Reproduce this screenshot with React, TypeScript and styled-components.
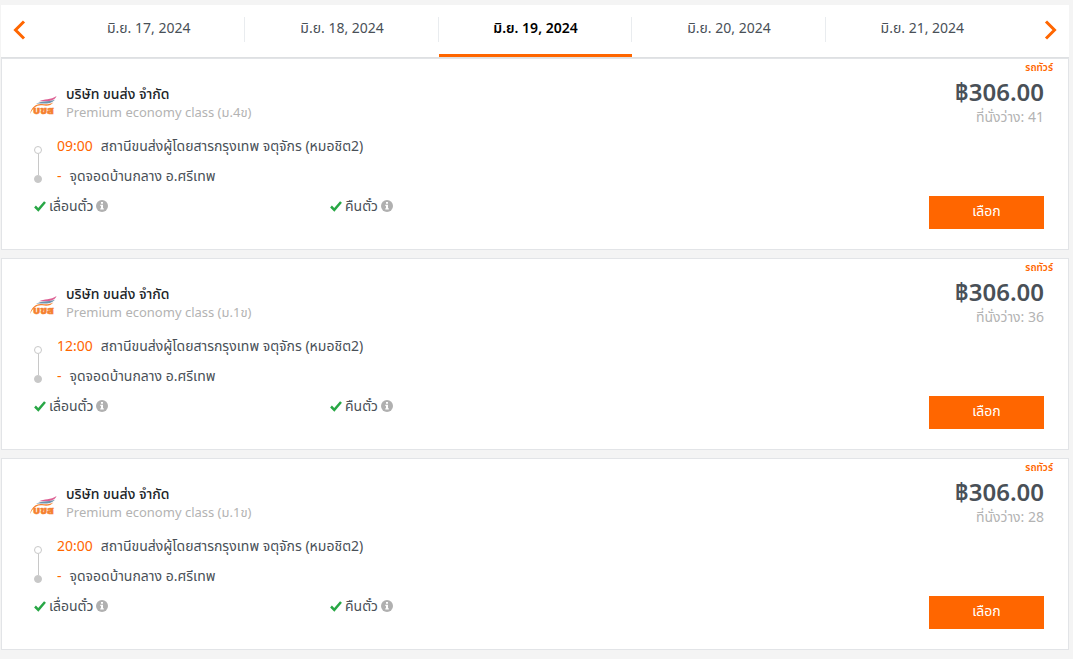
import React from 'react';
import styled, { createGlobalStyle } from 'styled-components';

const GlobalStyle = createGlobalStyle`
  * { box-sizing: border-box; }
  body {
    margin: 0;
    background: #f4f4f4;
    color: #495057;
    font-family: "Noto Sans", "Noto Sans Thai", "Open Sans", sans-serif;
    font-size: 14px;
    line-height: 20px;
  }
  button { font: inherit; border: 0; padding: 0; cursor: pointer; }
`;

const Page = styled.main`
  padding: 5px 4px 8px 1px;
`;

const DateBar = styled.nav`
  display: flex;
  height: 52px;
  background: #fff;
`;

const Arrow = styled.button<{ $side: 'left' | 'right' }>`
  flex: 0 0 ${p => (p.$side === 'left' ? '51px' : '50px')};
  display: flex;
  align-items: center;
  justify-content: ${p => (p.$side === 'left' ? 'flex-start' : 'flex-end')};
  padding: 0 12px 2px;
  background: none;
`;

const DateTab = styled.button<{ $active: boolean }>`
  flex: 1;
  position: relative;
  padding-bottom: 3px;
  background: none;
  color: ${p => (p.$active ? '#000' : '#495057')};
  font-weight: ${p => (p.$active ? 600 : 400)};
  border-bottom: 3px solid ${p => (p.$active ? '#ff6600' : 'transparent')};

  &:not(:last-of-type)::after {
    content: '';
    position: absolute;
    right: 0;
    top: 12px;
    width: 1px;
    height: 25px;
    background: #e9ecef;
  }
`;

const Tabs = styled.div`
  flex: 1;
  display: flex;
`;

const TripList = styled.div`
  display: grid;
  gap: 8px;
  border-top: 1px solid #dee0e2;
`;

const Card = styled.article`
  display: flex;
  min-height: 192px;
  background: #fff;
  border: 1px solid #e2e4e7;
`;

const Details = styled.div`
  flex: 1;
  padding-top: 26px;
`;

const Operator = styled.header`
  display: flex;
  gap: 8px;
  padding-left: 28px;
  margin-bottom: 13px;
`;

const LogoBox = styled.div`
  flex: none;
  width: 28px;
  padding-top: 11px;
`;

const OperatorName = styled.h2`
  margin: 0;
  color: #212529;
  font-size: 14px;
  line-height: 18px;
  font-weight: 500;
`;

const BusClass = styled.p`
  margin: 0;
  color: #b3b3b3;
  font-size: 13px;
  line-height: 18px;
`;

const Route = styled.div`
  display: flex;
  gap: 14px;
  padding-left: 31px;
`;

const Track = styled.div`
  display: flex;
  flex-direction: column;
  align-items: center;
  width: 10px;
  padding-top: 10px;
`;

const Stop = styled.span<{ $end?: boolean }>`
  width: 8px;
  height: 8px;
  border: 1px solid #c8c8c8;
  border-radius: 50%;
  background: ${p => (p.$end ? '#c8c8c8' : '#fff')};
`;

const Line = styled.span`
  width: 1px;
  height: 21px;
  background: #c8c8c8;
`;

const Stops = styled.div`
  line-height: 30px;
  margin-top: -5px;
`;

const StopRow = styled.div`
  display: flex;
  gap: 8px;
  height: 30px;
  white-space: nowrap;
`;

const Time = styled.span`
  color: #ff6600;
`;

const Perks = styled.div`
  display: grid;
  grid-template-columns: repeat(3, 1fr);
`;

const Perk = styled.div`
  display: flex;
  align-items: center;
  gap: 3px;
  height: 30px;
  padding-left: 32px;
`;

const InfoButton = styled.button`
  display: flex;
  background: none;
`;

const Side = styled.div`
  flex: 0 0 178px;
  display: flex;
  flex-direction: column;
  align-items: flex-end;
  padding-right: 24px;
`;

const Kind = styled.span`
  margin-right: -9px;
  color: #ff6600;
  font-size: 10px;
  line-height: 16px;
  font-weight: 600;
`;

const Price = styled.strong`
  font-size: 24px;
  line-height: 34px;
  font-weight: 600;
`;

const Seats = styled.span`
  color: #b3b3b3;
  line-height: 16px;
`;

const SelectButton = styled.button`
  width: 115px;
  height: 33px;
  margin-top: 71px;
  padding-bottom: 4px;
  background: #ff6600;
  color: #fff;
`;

const Chevron = ({ side }: { side: 'left' | 'right' }) => (
  <svg width="13" height="20" viewBox="0 0 13 20" fill="none" stroke="#ff6600" strokeWidth="3">
    <path d={side === 'left' ? 'M11 1.5 2.500 10l8.500 8.500' : 'M2 1.500 10.500 10l-8.500 8.500'} />
  </svg>
);

const LogoText = styled.text`
  font-size: 11px;
  font-weight: 900;
  fill: #f5812f;
  stroke: #f5812f;
  stroke-width: 0.5px;
`;

const Logo = () => (
  <svg width="28" height="22" viewBox="0 0 28 22" role="img" aria-label="บขส">
    <path d="M9 5.500C14 2.500 21 4 26.500 0 25.500 3.500 21 5 17 5.300 13.500 5.500 11 5 9 5.500Z" fill="#dc5f93" />
    <path d="M6 8c5-3.800 11-1.500 19-4.300-3 3.200-7 3.900-11 3.900C11 7.600 9 7.300 6 8Z" fill="#6d93ad" />
    <path d="M0 18C1.500 11 6 7.300 12 8c5 .7 8 .2 11.500-1.800-2.500 3.300-6 4-11 3.100C7 8.500 3 11.500 0 18Z" fill="#f5812f" />
    <LogoText x="3" y="18">บขส</LogoText>
  </svg>
);

const Check = () => (
  <svg width="12" height="12" viewBox="0 0 12 12" fill="none" stroke="#28a745" strokeWidth="2.500">
    <path d="M1 6.500 4.300 9.800 11 2" />
  </svg>
);

const InfoIcon = () => (
  <svg width="12" height="12" viewBox="0 0 12 12">
    <circle cx="6" cy="6" r="6" fill="#b0b0b0" />
    <path d="M5 2h2v1.700H5ZM4.300 4.800H7v3.500h.8v1.200H4.300V8.300H5V6h-.7Z" fill="#fff" />
  </svg>
);

const days = [17, 18, 19, 20, 21];

const trips = [
  { time: '09:00', bus: 'ม.4ข', seats: 41 },
  { time: '12:00', bus: 'ม.1ข', seats: 36 },
  { time: '20:00', bus: 'ม.1ข', seats: 28 },
];

export default function App() {
  return (
    <>
      <GlobalStyle />
      <Page>
        <DateBar>
          <Arrow $side="left" aria-label="ก่อนหน้า"><Chevron side="left" /></Arrow>
          <Tabs>
            {days.map(day => (
              <DateTab key={day} $active={day === 19}>{`มิ.ย. ${day}, 2024`}</DateTab>
            ))}
          </Tabs>
          <Arrow $side="right" aria-label="ถัดไป"><Chevron side="right" /></Arrow>
        </DateBar>
        <TripList>
          {trips.map(trip => (
            <Card key={trip.time}>
              <Details>
                <Operator>
                  <LogoBox><Logo /></LogoBox>
                  <div>
                    <OperatorName>บริษัท ขนส่ง จำกัด</OperatorName>
                    <BusClass>{`Premium economy class (${trip.bus})`}</BusClass>
                  </div>
                </Operator>
                <Route>
                  <Track>
                    <Stop />
                    <Line />
                    <Stop $end />
                  </Track>
                  <Stops>
                    <StopRow><Time>{trip.time}</Time><span>สถานีขนส่งผู้โดยสารกรุงเทพ จตุจักร (หมอชิต2)</span></StopRow>
                    <StopRow><Time>-</Time><span>จุดจอดบ้านกลาง อ.ศรีเทพ</span></StopRow>
                  </Stops>
                </Route>
                <Perks>
                  {['เลื่อนตั๋ว', 'คืนตั๋ว'].map(label => (
                    <Perk key={label}>
                      <Check />
                      <span>{label}</span>
                      <InfoButton aria-label={label}><InfoIcon /></InfoButton>
                    </Perk>
                  ))}
                </Perks>
              </Details>
              <Side>
                <Kind>รถทัวร์</Kind>
                <Price>฿306.00</Price>
                <Seats>{`ที่นั่งว่าง: ${trip.seats}`}</Seats>
                <SelectButton>เลือก</SelectButton>
              </Side>
            </Card>
          ))}
        </TripList>
      </Page>
    </>
  );
}
